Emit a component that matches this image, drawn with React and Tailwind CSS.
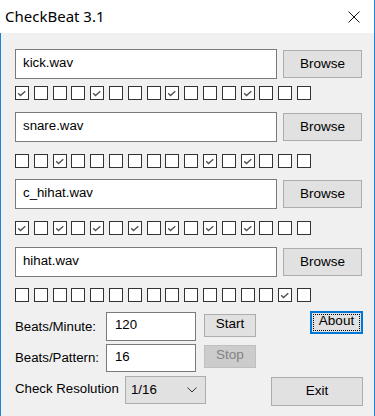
import React from 'react';

const tracks = [
  { file: 'kick.wav', beats: [1, 5, 9, 13], inputGap: 'mt-[16px]', boxGap: 'mt-[7px]' },
  { file: 'snare.wav', beats: [3, 11, 13], inputGap: 'mt-[12px]', boxGap: 'mt-[12px]' },
  { file: 'c_hihat.wav', beats: [1, 3, 5, 7, 9, 11, 13], inputGap: 'mt-[11px]', boxGap: 'mt-[12px]' },
  { file: 'hihat.wav', beats: [15], inputGap: 'mt-[12px]', boxGap: 'mt-[11px]' },
];

const font = { fontFamily: '"Liberation Sans", Arial, sans-serif' };

function CheckBox({ checked }) {
  return (
    <div className="w-[14px] h-[14px] border border-[#333333] bg-white">
      {checked && (
        <svg viewBox="0 0 12 12" className="w-full h-full">
          <polyline points="2.2,6.3 4.5,8.6 9.3,4.3" fill="none" stroke="#505050" strokeWidth="1.4" />
        </svg>
      )}
    </div>
  );
}

function Button({ children, className = '', disabled }) {
  return (
    <div
      className={`flex items-center justify-center border text-[13.5px] ${
        disabled ? 'bg-[#cccccc] border-[#bfbfbf] text-[#838383]' : 'bg-[#e1e1e1] border-[#adadad] text-black'
      } ${className}`}
    >
      {children}
    </div>
  );
}

function TextBox({ value, className = '' }) {
  return (
    <div className={`flex items-center bg-white border border-[#7a7a7a] text-[13.25px] text-black ${className}`}>
      {value}
    </div>
  );
}

export default function App() {
  return (
    <div className="w-[375px] h-[416px] bg-white flex flex-col border-r border-[#1883d7] overflow-hidden" style={font}>
      {/* title bar */}
      <div className="h-[33px] flex items-center justify-between pl-[5px] pr-[14px] shrink-0">
        <span className="text-[15px] text-black" style={{ fontFamily: '"Noto Sans", sans-serif' }}>
          CheckBeat 3.1
        </span>
        <svg viewBox="0 0 12 12" className="w-[12px] h-[12px]">
          <path d="M0.5 0.5 L11.5 11.5 M11.5 0.5 L0.5 11.5" stroke="#111" strokeWidth="1" />
        </svg>
      </div>

      {/* body */}
      <div className="flex-1 bg-[#f0f0f0] border-l border-[#1883d7] pl-[14px]">
        {tracks.map((t) => (
          <div key={t.file}>
            <div className={`flex items-center ${t.inputGap}`}>
              <TextBox value={t.file} className="w-[262px] h-[30px] pl-[7px] pb-[3px]" />
              <Button className="ml-[6px] w-[79px] h-[28px]">Browse</Button>
            </div>
            <div className={`flex justify-between w-[296px] ${t.boxGap}`}>
              {Array.from({ length: 16 }, (_, i) => (
                <CheckBox key={i} checked={t.beats.includes(i + 1)} />
              ))}
            </div>
          </div>
        ))}

        {/* controls */}
        <div className="flex items-start mt-[9px]">
          <div className="w-[91px] h-[29px] mt-[1px] flex items-center text-[13.25px]">Beats/Minute:</div>
          <TextBox value="120" className="mt-[1px] w-[90px] h-[29px] pl-[8px] pb-[4px]" />
          <Button className="mt-[3px] ml-[8px] w-[52px] h-[23px] pb-[2px]">Start</Button>
          <div className="relative ml-[54px] w-[53px] h-[23px] bg-[#e1e1e1] border-2 border-[#0078d7] flex items-center justify-center text-[13.5px] pb-[2px]">
            <span className="absolute inset-[1px] border border-dotted border-black" />
            About
          </div>
        </div>
        <div className="flex items-start mt-[3px]">
          <div className="w-[91px] h-[28px] flex items-center text-[13.25px]">Beats/Pattern:</div>
          <TextBox value="16" className="w-[90px] h-[28px] pl-[8px] pb-[3px]" />
          <Button disabled className="mt-[1px] ml-[8px] w-[52px] h-[23px] pb-[2px]">Stop</Button>
        </div>
        <div className="flex items-start mt-[4px]">
          <div className="w-[110px] h-[28px] flex items-center text-[13.25px] pb-[2px]">Check Resolution</div>
          <div className="w-[81px] h-[28px] bg-[#e1e1e1] border border-[#adadad] flex items-center justify-between pl-[5px] pr-[8px] text-[13.25px]">
            <span>1/16</span>
            <svg viewBox="0 0 10 6" className="w-[10px] h-[6px]">
              <polyline points="0.5,0.5 5,5 9.5,0.5" fill="none" stroke="#333" strokeWidth="1" />
            </svg>
          </div>
          <Button className="mt-[1px] ml-[65px] w-[92px] h-[29px]">Exit</Button>
        </div>
      </div>
    </div>
  );
}
